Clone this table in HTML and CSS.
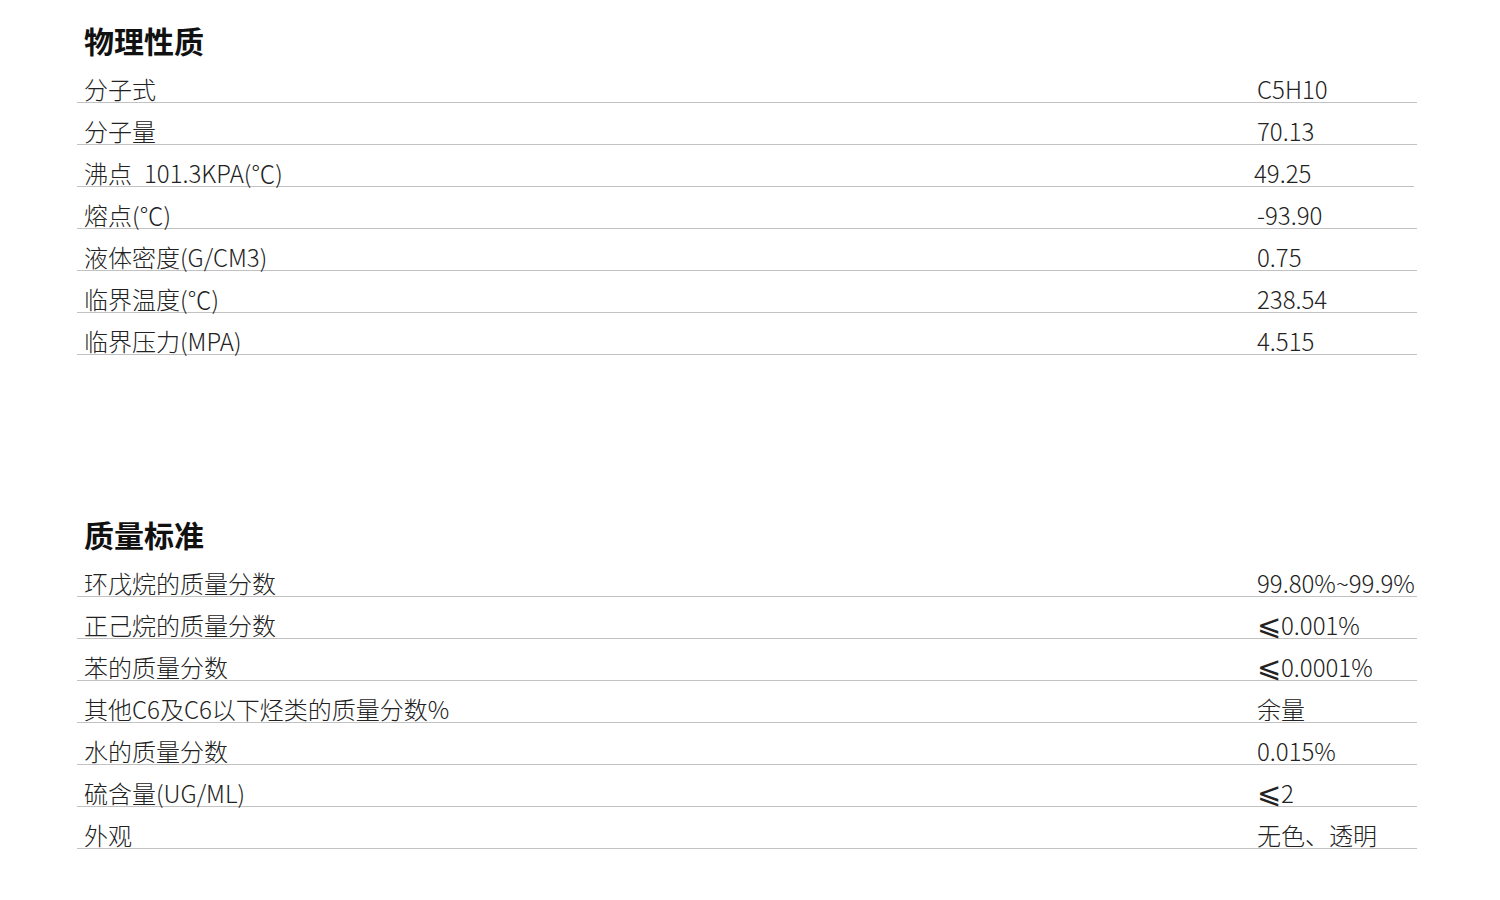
FILE: index.html
```html
<!DOCTYPE html>
<html lang="zh">
<head>
<meta charset="utf-8">
<title>环戊烷</title>
<link rel="stylesheet" href="styles.css">
</head>
<body>
<div class="page">
  <section class="section">
    <h2 class="title">物理性质</h2>
    <div class="row"><span class="label">分子式</span><span class="value">C5H10</span></div>
    <div class="row"><span class="label">分子量</span><span class="value">70.13</span></div>
    <div class="row narrow"><span class="label">沸点<span class="gap"></span>101.3KPA(℃)</span><span class="value">49.25</span></div>
    <div class="row"><span class="label">熔点(℃)</span><span class="value">-93.90</span></div>
    <div class="row"><span class="label">液体密度(G/CM3)</span><span class="value">0.75</span></div>
    <div class="row"><span class="label">临界温度(℃)</span><span class="value">238.54</span></div>
    <div class="row"><span class="label">临界压力(MPA)</span><span class="value">4.515</span></div>
  </section>
  <section class="section">
    <h2 class="title">质量标准</h2>
    <div class="row"><span class="label">环戊烷的质量分数</span><span class="value">99.80%~99.9%</span></div>
    <div class="row"><span class="label">正己烷的质量分数</span><span class="value"><span class="le">⩽</span>0.001%</span></div>
    <div class="row"><span class="label">苯的质量分数</span><span class="value"><span class="le">⩽</span>0.0001%</span></div>
    <div class="row"><span class="label">其他C6及C6以下烃类的质量分数%</span><span class="value">余量</span></div>
    <div class="row"><span class="label">水的质量分数</span><span class="value">0.015%</span></div>
    <div class="row"><span class="label">硫含量(UG/ML)</span><span class="value"><span class="le">⩽</span>2</span></div>
    <div class="row"><span class="label">外观</span><span class="value">无色、透明</span></div>
  </section>
</div>
</body>
</html>
```

FILE: styles.css
```css
html, body {
  margin: 0;
  padding: 0;
  background: #fff;
}
body {
  font-family: "Noto Sans CJK SC", "Noto Sans", sans-serif;
  color: #222;
}
.page {
  padding: 20px 0 0 77px;
}
.section {
  width: 1340px;
  margin-bottom: 159px;
}
.section:last-child {
  margin-bottom: 0;
}
.title {
  margin: 0 0 1px 7px;
  font-size: 30px;
  line-height: 40px;
  height: 40px;
  font-weight: 700;
  color: #111;
}
.row {
  box-sizing: border-box;
  height: 42px;
  padding-bottom: 1px;
  display: flex;
  align-items: flex-end;
  border-bottom: 1px solid #c2c2c2;
  font-size: 24px;
  line-height: 24px;
  font-weight: 300;
}
.label {
  box-sizing: border-box;
  width: 1180px;
  padding-left: 7px;
  white-space: nowrap;
}
.gap {
  display: inline-block;
  width: 12px;
}
.value {
  white-space: nowrap;
}
.le {
  display: inline-block;
  width: 24px;
  font-size: 29px;
  line-height: 24px;
  font-weight: 200;
  vertical-align: 0;
}
.row.narrow {
  width: 1337px;
}
.row.narrow .label {
  width: 1177px;
}
```
